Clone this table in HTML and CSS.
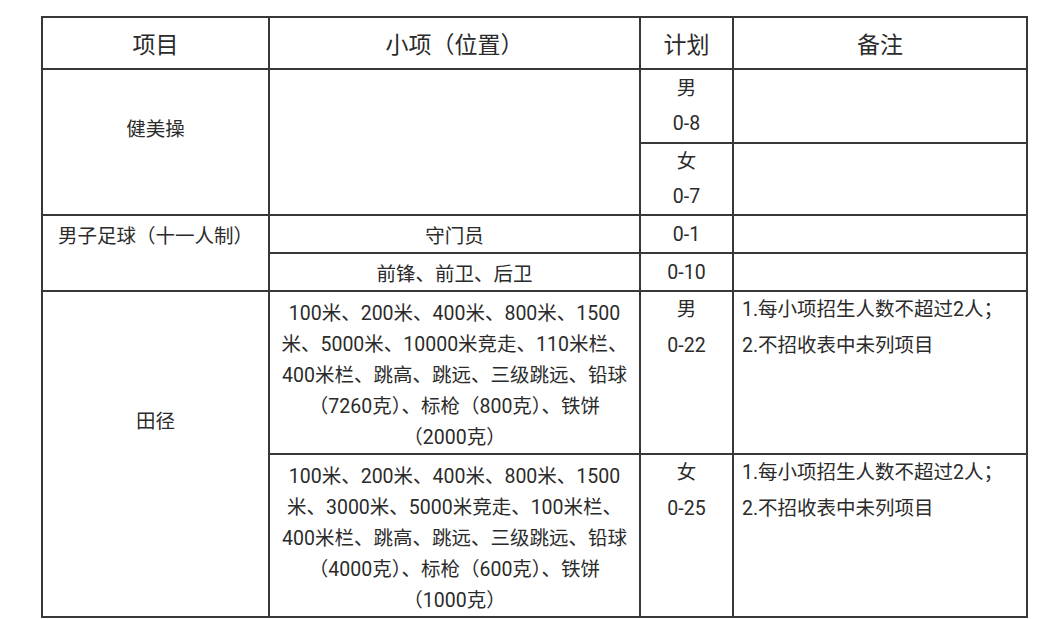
FILE: index.html
```html
<!DOCTYPE html>
<html lang="zh">
<head>
<meta charset="utf-8">
<link rel="stylesheet" href="styles.css">
</head>
<body>
<table class="plan">
  <colgroup>
    <col class="c1"><col class="c2"><col class="c3"><col class="c4">
  </colgroup>
  <thead>
    <tr class="head">
      <th>项目</th><th>小项（位置）</th><th>计划</th><th>备注</th>
    </tr>
  </thead>
  <tbody>
    <tr class="r-gym1">
      <td rowspan="2" class="item item-gym">健美操</td>
      <td rowspan="2"></td>
      <td class="quota">男<br>0-8</td>
      <td></td>
    </tr>
    <tr class="r-gym2">
      <td class="quota">女<br>0-7</td>
      <td></td>
    </tr>
    <tr class="r-fb">
      <td rowspan="2" class="item item-fb">男子足球（十一人制）</td>
      <td class="sub">守门员</td>
      <td class="quota">0-1</td>
      <td></td>
    </tr>
    <tr class="r-fb">
      <td class="sub">前锋、前卫、后卫</td>
      <td class="quota">0-10</td>
      <td></td>
    </tr>
    <tr class="r-tf">
      <td rowspan="2" class="item item-tf">田径</td>
      <td class="events">100米、200米、400米、800米、1500米、5000米、10000米竞走、110米栏、400米栏、跳高、跳远、三级跳远、铅球<span class="nw">（7260克）</span>、标枪<span class="nw">（800克）</span>、铁饼<span class="nw">（2000克）</span></td>
      <td class="quota top">男<br>0-22</td>
      <td class="note">1.每小项招生人数不超过2人；<br>2.不招收表中未列项目</td>
    </tr>
    <tr class="r-tf">
      <td class="events">100米、200米、400米、800米、1500米、3000米、5000米竞走、100米栏、400米栏、跳高、跳远、三级跳远、铅球<span class="nw">（4000克）</span>、标枪<span class="nw">（600克）</span>、铁饼<span class="nw">（1000克）</span></td>
      <td class="quota top">女<br>0-25</td>
      <td class="note">1.每小项招生人数不超过2人；<br>2.不招收表中未列项目</td>
    </tr>
  </tbody>
</table>
</body>
</html>
```

FILE: styles.css
```css
html, body {
  margin: 0;
  background: #ffffff;
}
body {
  padding: 16px 0 0 41px;
  font-family: Roboto, "Noto Sans CJK SC", "Noto Sans", sans-serif;
  color: #2b2b2b;
}
.plan {
  border-collapse: collapse;
  table-layout: fixed;
  width: 985px;
}
.c1 { width: 227px; }
.c2 { width: 371px; }
.c3 { width: 93px; }
.c4 { width: 294px; }

.plan th, .plan td {
  border: 2px solid #383838;
  padding: 0;
  text-align: center;
  vertical-align: middle;
  font-size: 19.5px;
  font-weight: 400;
}
.plan th {
  font-size: 23px;
  height: 50px;
}
.plan .r-gym1 td { height: 72px; }
.plan .r-gym2 td { height: 70px; }
.plan .r-fb td { height: 36px; }
.plan .r-tf td { height: 158px; }

.plan .quota { line-height: 35px; }
.plan .quota.top { vertical-align: top; line-height: 36px; padding-top: 0; }

.plan .item-gym { padding-bottom: 30px; }
.plan .item-fb { vertical-align: top; padding-top: 6px; line-height: 30px; }
.plan .item-tf { padding-bottom: 70px; }

.plan .r-tf .events {
  height: 152px;
  line-height: 31px;
  padding: 6px 7px 0 7px;
}
.nw { white-space: nowrap; }
.plan .note {
  text-align: left;
  vertical-align: top;
  line-height: 36px;
  padding: 0 8px 0 8px;
}
```
